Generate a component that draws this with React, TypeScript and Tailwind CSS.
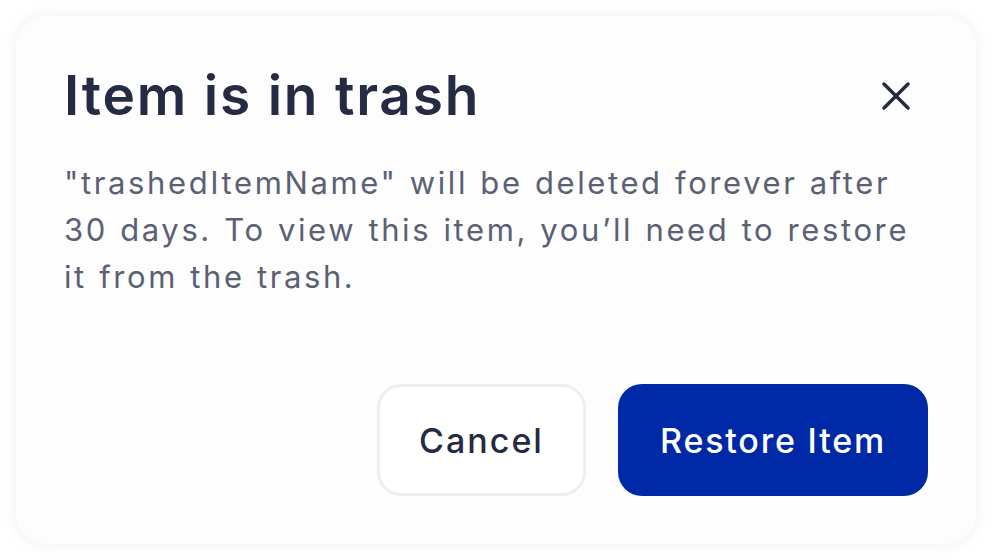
import React from 'react';

const CloseIcon: React.FC = () => (
  <svg width="28" height="28" viewBox="0 0 28 28" fill="none" stroke="currentColor" strokeWidth="3.5" strokeLinecap="round">
    <path d="M2 2L26 26" />
    <path d="M26 2L2 26" />
  </svg>
);

const TrashDialog: React.FC = () => {
  return (
    <div className="min-h-screen bg-white p-4" style={{ fontFamily: 'Inter, "Noto Sans", sans-serif' }}>
      <div className="w-[960px] h-[528px] rounded-[32px] bg-[#fdfdfe] shadow-[0_0_14px_rgba(200,205,230,0.35)] px-12 pt-12 pb-12 flex flex-col">
        <div className="flex items-start justify-between">
          <h1 className="text-[55px] leading-none font-semibold text-[#252b42] mt-[4px] tracking-[1.8px]">Item is in trash</h1>
          <button className="mt-[18px] mr-[18px] text-[#252b42]">
            <CloseIcon />
          </button>
        </div>
        <p className="mt-[36px] text-[31px] leading-[47px] text-[#5b6174] tracking-[2.6px] [word-spacing:1px] whitespace-nowrap">
          "trashedItemName" will be deleted forever after
          <br />
          30 days. To view this item, you’ll need to restore
          <br />
          it from the trash.
        </p>
        <div className="mt-auto flex justify-end gap-8">
          <button className="w-[209px] h-[112px] rounded-[24px] border-[3px] border-[#eeeff1] bg-white text-[34px] font-medium text-[#252b42] tracking-[2px]">
            Cancel
          </button>
          <button className="w-[310px] h-[112px] rounded-[24px] bg-[#0029a7] text-[34px] font-medium text-white tracking-[1.8px]">
            Restore Item
          </button>
        </div>
      </div>
    </div>
  );
};

export default function App() {
  return <TrashDialog />;
}
